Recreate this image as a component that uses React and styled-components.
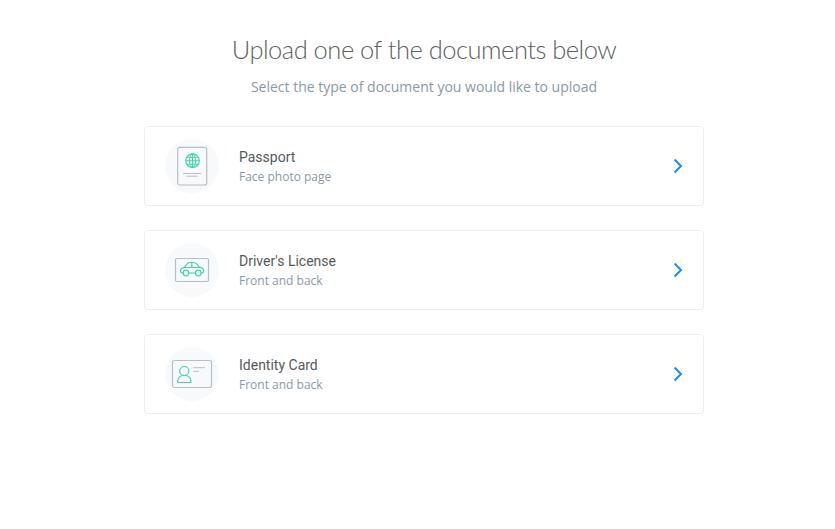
import React from "react";
import styled, { createGlobalStyle } from "styled-components";

const Global = createGlobalStyle`
  html, body { margin: 0; padding: 0; background: #fff; }
`;

const Page = styled.main`
  width: 560px;
  margin-left: 144px;
  padding-top: 32px;
  display: flex;
  flex-direction: column;
  align-items: center;
`;

const Heading = styled.h1`
  margin: 0;
  font-family: "Lato", sans-serif;
  font-weight: 300;
  font-size: 25.5px;
  line-height: 34px;
  letter-spacing: -0.5px;
  color: #5a5f63;
  white-space: nowrap;
`;

const Subheading = styled.p`
  margin: 11px 0 0;
  font-family: "Open Sans", sans-serif;
  font-size: 14px;
  line-height: 20px;
  color: #8a98a3;
  white-space: nowrap;
`;

const List = styled.div`
  width: 100%;
  margin-top: 29px;
  display: flex;
  flex-direction: column;
  gap: 24px;
`;

const Card = styled.div`
  box-sizing: border-box;
  height: 80px;
  padding: 0 20px;
  display: flex;
  align-items: center;
  background: #fff;
  border: 1px solid #eaedef;
  border-radius: 4px;
`;

const IconCircle = styled.div`
  flex: none;
  width: 54px;
  height: 54px;
  border-radius: 50%;
  background: #f7f9fb;
  display: flex;
  align-items: center;
  justify-content: center;
`;

const Text = styled.div`
  flex: 1;
  margin-left: 20px;
  display: flex;
  flex-direction: column;
  gap: 1px;
`;

const Title = styled.div`
  font-family: "Roboto", sans-serif;
  font-size: 14px;
  line-height: 20px;
  color: #55595d;
`;

const Caption = styled.div`
  font-family: "Open Sans", sans-serif;
  font-size: 12px;
  line-height: 18px;
  color: #8a98a3;
`;

const Passport = () => (
  <svg width="32" height="42" viewBox="0 0 32 42" fill="none">
    <rect x="1.7" y="2.3" width="29" height="37.700" rx="2" stroke="#b4c0c6" strokeWidth="1.2" />
    <g stroke="#46d0ae" strokeWidth="1.100">
      <circle cx="16.500" cy="15.700" r="6.800" />
      <ellipse cx="16.500" cy="15.700" rx="3" ry="6.800" />
      <path d="M16.500 9v13.400M9.700 15.700h13.600M10.700 12.200h11.600M10.700 19.200h11.600" />
    </g>
    <path d="M7 28.500h18M10.300 31.200h11.400" stroke="#b4c0c6" strokeWidth="1" />
  </svg>
);

const License = () => (
  <svg width="36" height="26" viewBox="0 0 36 26" fill="none">
    <rect x="1.500" y="1.500" width="33" height="23" rx="1.500" stroke="#b4c0c6" strokeWidth="1.200" />
    <g stroke="#46d0ae" strokeWidth="1.200">
      <circle cx="12" cy="16" r="2.800" />
      <circle cx="24.300" cy="16" r="2.800" />
      <path d="M14.800 16h6.700M9.200 16H8.500c-1.200 0-2-.8-2-2 0-1.700 1.200-3 3.500-3.400l2.500-3C13.200 6.500 14 5.500 15.500 5.500h3.500c1.500 0 2.800.5 3.800 1.700l2.400 2.900c2.500.4 4.500 1.300 4.500 3.400 0 1.500-.7 2.500-2 2.500h-.6" />
      <path d="M10 10.500h15.500M17.800 5.500v5" />
    </g>
  </svg>
);

const IdCard = () => (
  <svg width="42" height="30" viewBox="0 0 42 30" fill="none">
    <rect x="1.500" y="1.500" width="39" height="27" rx="2" stroke="#b4c0c6" strokeWidth="1.200" />
    <g stroke="#46d0ae" strokeWidth="1.200">
      <circle cx="13.300" cy="12" r="4.500" />
      <path d="M6.700 23.500v-1.500c0-3 2.500-5.500 5.500-5.500h2.200c3 0 5.500 2.500 5.500 5.500v1.500z" />
    </g>
    <path d="M22.300 8.700H34M22.300 12.300H28" stroke="#b4c0c6" strokeWidth="1" />
  </svg>
);

const Chevron = () => (
  <svg width="10" height="16" viewBox="0 0 10 16" fill="none">
    <path d="M1.500 1.500 8 8l-6.500 6.500" stroke="#1b8ef0" strokeWidth="2" />
  </svg>
);

const docs = [
  { title: "Passport", caption: "Face photo page", Icon: Passport },
  { title: "Driver's License", caption: "Front and back", Icon: License },
  { title: "Identity Card", caption: "Front and back", Icon: IdCard },
];

export default function App() {
  return (
    <>
      <Global />
      <Page>
        <Heading>Upload one of the documents below</Heading>
        <Subheading>Select the type of document you would like to upload</Subheading>
        <List>
          {docs.map(({ title, caption, Icon }) => (
            <Card key={title}>
              <IconCircle><Icon /></IconCircle>
              <Text>
                <Title>{title}</Title>
                <Caption>{caption}</Caption>
              </Text>
              <Chevron />
            </Card>
          ))}
        </List>
      </Page>
    </>
  );
}
